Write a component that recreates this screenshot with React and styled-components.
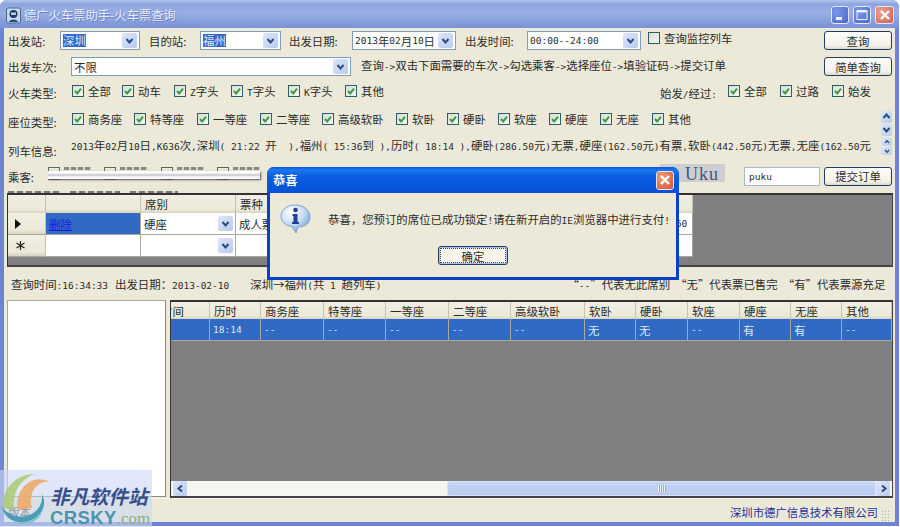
import React from "react";
import styled, { createGlobalStyle } from "styled-components";

const GlobalStyle = createGlobalStyle`
  html, body {
    margin: 0;
    padding: 0;
    background: #fff;
    overflow: hidden;
  }
  * {
    box-sizing: border-box;
  }
`;

const Lat = styled.span`
  font-family: "DejaVu Sans Mono", monospace;
  font-size: 9.5px;
  white-space: pre;
`;

// latin in the original font is half a CJK char wide, so it gets its own span
const T = ({ children }) => (
  <>
    {children.split(/([\x20-\x7e]+)/).map((part, i) =>
      i % 2 ? <Lat key={i}>{part}</Lat> : part
    )}
  </>
);

const Screen = styled.div`
  position: relative;
  width: 900px;
  height: 527px;
  overflow: hidden;
  font-family: "Noto Sans CJK SC", "Liberation Sans", sans-serif;
  font-size: 11.4px;
  color: #2b2b2b;
`;

const Window = styled.div`
  width: 899px;
  height: 526px;
  display: flex;
  flex-direction: column;
  padding: 0 4px 4px 4px;
  border-radius: 7px 7px 0 0;
  background: #6d84d2;
`;

const TitleBar = styled.div`
  height: 28px;
  margin: 0 -4px;
  padding: 2px 5px 0 6px;
  display: flex;
  align-items: center;
  border-radius: 7px 7px 0 0;
  background: linear-gradient(180deg, #b4c6ee 0, #8ea5e0 4px, #9aaee4 13px, #8199da 24px, #7c94d6 100%);
`;

const TitleText = styled.div`
  margin-left: 3px;
  font-size: 12.3px;
  color: #e6ebf8;
  text-shadow: 1px 1px 0 #6b82c8;
`;

const WinButtons = styled.div`
  margin-left: auto;
  display: flex;
  gap: 4px;
`;

const WinButton = styled.div`
  width: ${(p) => (p.$close ? 19 : 18)}px;
  height: 18px;
  border-radius: 3px;
  border: 1px solid #e2e8f8;
  display: flex;
  align-items: center;
  justify-content: center;
  background: ${(p) =>
    p.$close
      ? "radial-gradient(circle at 30% 30%, #f0a08c, #c86454)"
      : "radial-gradient(circle at 30% 30%, #7c98e8, #4a66c8)"};
`;

const Client = styled.div`
  flex: 1;
  display: flex;
  flex-direction: column;
  background: #ece9d8;
  min-height: 0;
`;

const Row = styled.div`
  height: ${(p) => p.$h}px;
  padding: 0 3px 0 4px;
  display: flex;
  align-items: center;
  flex: none;
`;

const Label = styled.div`
  flex: none;
  width: ${(p) => p.$w}px;
  margin-left: ${(p) => p.$ml || 0}px;
  margin-top: ${(p) => p.$mt || 0}px;
  white-space: nowrap;
`;

const Hint = styled.div`
  margin-left: 10px;
  margin-top: -4px;
  white-space: nowrap;
`;

const ComboBox = styled.div`
  flex: none;
  width: ${(p) => p.$w}px;
  margin-left: ${(p) => p.$ml || 0}px;
  height: 19px;
  background: #fff;
  border: 1px solid #7f9db9;
  padding: 1px 2px;
  display: flex;
  align-items: center;
  white-space: nowrap;
`;

const Selected = styled.span`
  background: #316ac5;
  color: #dfe8f8;
  line-height: 13px;
`;

const ArrowBox = styled.div`
  margin-left: auto;
  flex: none;
  width: ${(p) => p.$w || 15}px;
  height: ${(p) => p.$h || 15}px;
  border-radius: 2px;
  display: flex;
  align-items: center;
  justify-content: center;
  background: linear-gradient(135deg, #dce6fa, #b8cbee);
  color: #35507f;
`;

const Chevron = ({ dir = "down", size = 9 }) => {
  const d = {
    down: "M1.5 3 L4.5 6.5 L7.5 3",
    up: "M1.5 6 L4.5 2.5 L7.5 6",
    left: "M6 1.5 L2.5 4.5 L6 7.5",
    right: "M3 1.5 L6.5 4.5 L3 7.5",
  }[dir];
  return (
    <svg width={size} height={size} viewBox="0 0 9 9">
      <path d={d} fill="none" stroke="#2c4a7c" strokeWidth="2" />
    </svg>
  );
};

const Combo = ({ w, ml, children }) => (
  <ComboBox $w={w} $ml={ml}>
    {children}
    <ArrowBox>
      <Chevron />
    </ArrowBox>
  </ComboBox>
);

const Button = styled.div`
  flex: none;
  width: ${(p) => p.$w || 68}px;
  height: 19px;
  margin-left: ${(p) => p.$ml || "auto"};
  border: 1px solid #1f3f66;
  border-radius: 3px;
  background: linear-gradient(180deg, #fdfdfa, #f3f1e8 80%, #dcd8c8);
  display: flex;
  align-items: center;
  justify-content: center;
`;

const CheckItem = styled.div`
  flex: none;
  width: ${(p) => p.$w}px;
  margin-top: ${(p) => p.$mt || 0}px;
  display: flex;
  align-items: center;
  gap: 4px;
  white-space: nowrap;
`;

const Box = styled.div`
  flex: none;
  width: 12px;
  height: 12px;
  border: 1px solid #2c5f66;
  background: linear-gradient(135deg, #dcdcd0, #f6f6f0);
  display: flex;
  align-items: center;
  justify-content: center;
`;

const Tick = () => (
  <svg width="10" height="10" viewBox="0 0 10 10">
    <path d="M2 5 L4.2 7.4 L8 2.6" fill="none" stroke="#2fa04a" strokeWidth="2" />
  </svg>
);

const Check = ({ w, mt, label }) => (
  <CheckItem $w={w} $mt={mt}>
    <Box>
      <Tick />
    </Box>
    <span>
      <T>{label}</T>
    </span>
  </CheckItem>
);

const Monitor = styled(CheckItem)`
  margin-left: 7px;
  margin-top: -6px;
`;

const SpinStack = styled.div`
  margin-left: auto;
  margin-top: ${(p) => p.$mt}px;
  flex: none;
  display: flex;
  flex-direction: column;
  gap: ${(p) => p.$gap}px;
`;

const Info = styled.div`
  margin-top: -3px;
  flex: none;
  width: 806px;
  white-space: nowrap;
  overflow: hidden;
`;

const PassengerArea = styled.div`
  position: relative;
  flex: none;
  width: 212px;
  height: 34px;
  padding-top: 8px;
`;

const GhostItems = styled.div`
  display: flex;
  gap: 13px;
`;

const GhostItem = styled.div`
  width: 50px;
  display: flex;
  gap: 4px;
`;

const GhostBox = styled.div`
  flex: none;
  width: 12px;
  height: 13px;
  border: 1px solid #5c6660;
`;

const GhostLabel = styled.div`
  flex: 1;
  height: 3px;
  background: repeating-linear-gradient(90deg, #8a8a80 0 5px, #d8d5c6 5px 7px);
`;

const Redaction = styled.div`
  position: absolute;
  left: 0;
  top: 12px;
  width: 212px;
  height: 8px;
  background: linear-gradient(180deg, #fff 0, #fff 25%, #c4c4c4 50%, #f2f2f2 70%, #fff 100%);
  box-shadow: 1px 1px 2px #555;
`;

const Smudges = styled.div`
  position: absolute;
  left: -40px;
  bottom: 0;
  display: flex;
  gap: 10px;
`;

const Smudge = styled.div`
  width: ${(p) => p.$w}px;
  height: 2px;
  background: repeating-linear-gradient(90deg, #777 0 6px, #d8d5c6 6px 9px);
`;

const Captcha = styled.div`
  flex: none;
  margin-left: 400px;
  margin-top: -6px;
  width: 65px;
  height: 18px;
  padding-right: 6px;
  background: #cdcdd2;
  color: #43557c;
  font-family: "Liberation Serif", serif;
  font-size: 18px;
  letter-spacing: 1px;
  line-height: 20px;
  text-align: right;
`;

const CodeInput = styled.div`
  flex: none;
  width: 76px;
  height: 19px;
  margin-left: 19px;
  padding-left: 4px;
  background: #fff;
  border: 1px solid #a9b7c6;
  display: flex;
  align-items: center;
`;

const Sunken = styled.div`
  flex: none;
  margin-left: 3px;
  width: ${(p) => p.$w}px;
  height: ${(p) => p.$h}px;
  background: #808080;
  border-style: solid;
  border-width: 2px 1px 2px 1px;
  border-color: #333 #444 #444 #333;
  display: flex;
  flex-direction: column;
  overflow: hidden;
`;

const GridRow = styled.div`
  display: grid;
  grid-template-columns: ${(p) => p.$cols};
  width: ${(p) => p.$width || "100%"};
  height: ${(p) => p.$h}px;
  flex: none;
`;

const HeadCell = styled.div`
  background: linear-gradient(180deg, #f1efe4, #ece9d8 80%, #d8d4c2);
  border-right: 1px solid #c6c2b0;
  padding-left: 4px;
  display: flex;
  align-items: center;
  white-space: nowrap;
  overflow: hidden;
`;

const ClippedHead = styled(HeadCell)`
  padding-left: 0;
  span {
    margin-left: -10px;
  }
`;

const RowHead = styled(HeadCell)`
  border-bottom: 1px solid #aca899;
  padding-left: 7px;
`;

const Cell = styled.div`
  background: ${(p) => (p.$sel ? "#316ac5" : "#fff")};
  color: ${(p) => (p.$sel ? "#dfe8f8" : "#2b2b2b")};
  border-right: 1px solid #aca899;
  border-bottom: 1px solid #aca899;
  padding: 0 2px 0 3px;
  display: flex;
  align-items: center;
  white-space: nowrap;
  overflow: hidden;
`;

const Link = styled.span`
  color: #1a1ae0;
  text-decoration: underline;
`;

const Pointer = styled.div`
  width: 0;
  height: 0;
  border-left: 6px solid #111;
  border-top: 5px solid transparent;
  border-bottom: 5px solid transparent;
`;

const StatusPiece = styled.div`
  flex: none;
  margin-left: ${(p) => p.$ml}px;
  white-space: pre;
`;

const Lower = styled.div`
  flex: none;
  height: 198px;
  display: flex;
  padding-left: 3px;
`;

const ListPane = styled.div`
  flex: none;
  width: 159px;
  height: 197px;
  background: #fff;
  border: 1px solid #aca899;
  border-right-color: #8e8b7c;
  border-bottom-color: #8e8b7c;
`;

const TrainGrid = styled(Sunken)`
  margin-left: 4px;
`;

const GrayFill = styled.div`
  flex: 1;
  background: #808080;
`;

const ScrollBar = styled.div`
  flex: none;
  height: 15px;
  padding: 0 2px;
  display: flex;
  background: #f6f5f0;
`;

const ScrollThumb = styled.div`
  flex: none;
  margin-left: ${(p) => p.$ml}px;
  width: ${(p) => p.$w}px;
  border-radius: 2px;
  background: linear-gradient(180deg, #c6d5f6, #b9cbf2);
  border: 1px solid #d8e2f8;
  display: flex;
  align-items: center;
  justify-content: center;
`;

const Grip = styled.div`
  width: 8px;
  height: 7px;
  background: repeating-linear-gradient(90deg, #eef3fd 0 1px, #8fa8d8 1px 2px);
`;

const StatusBar = styled.div`
  flex: 1;
  padding: 3px 4px 0 4px;
  display: flex;
  align-items: center;
  border-top: 1px solid #f6f4ea;
`;

const Company = styled.div`
  margin-left: auto;
  color: #23319a;
  white-space: nowrap;
`;

const SizeGrip = styled.div`
  width: 10px;
  height: 12px;
  margin-left: 3px;
  align-self: flex-end;
  background-image: radial-gradient(#b0ad9c 1px, transparent 1px);
  background-size: 3px 3px;
`;

const Dialog = styled.div`
  position: absolute;
  left: 267px;
  top: 167px;
  width: 412px;
  height: 113px;
  display: flex;
  flex-direction: column;
  border-radius: 7px 7px 0 0;
  background: #0a3fc8;
  padding: 0 3px 3px 3px;
`;

const DialogTitle = styled.div`
  height: 26px;
  margin: 0 -3px;
  padding: 0 5px 0 6px;
  display: flex;
  align-items: center;
  justify-content: space-between;
  border-radius: 7px 7px 0 0;
  background: linear-gradient(180deg, #0a57d8 0, #1a78f0 3px, #0a5ce0 10px, #0556dc 20px, #0a50d0 100%);
  color: #f4f7ff;
  font-size: 12.3px;
  font-weight: 700;
`;

const DialogClose = styled(WinButton)`
  width: 18px;
  height: 19px;
  background: radial-gradient(circle at 30% 30%, #f0a080, #d8502c);
`;

const DialogBody = styled.div`
  flex: 1;
  background: #ece9d8;
  display: flex;
  flex-direction: column;
  padding: 11px 0 0 10px;
`;

const DialogMessage = styled.div`
  display: flex;
  align-items: center;
  gap: 16px;
  white-space: nowrap;
`;

const DialogButton = styled.div`
  width: 70px;
  height: 19px;
  margin: 12px 0 0 158px;
  border: 1px solid #1f3f66;
  border-radius: 3px;
  box-shadow: inset 0 0 0 1px #a9c0e8;
  outline: 1px dotted #444;
  outline-offset: -3px;
  background: #f6f4ea;
  display: flex;
  align-items: center;
  justify-content: center;
`;

const Watermark = styled.div`
  position: absolute;
  left: 0;
  top: 470px;
  width: 152px;
  height: 57px;
  background: rgba(203, 217, 243, 0.62);
  display: flex;
`;

const LogoText = styled.div`
  margin-left: -2px;
  padding-top: 15px;
  white-space: nowrap;
`;

const LogoCn = styled.div`
  font-size: 19.5px;
  line-height: 22px;
  font-weight: 700;
  font-style: italic;
  color: #36508e;
`;

const LogoEn = styled.div`
  margin-top: 2px;
  font-family: "Liberation Sans", sans-serif;
  font-size: 18.5px;
  line-height: 17px;
  font-weight: 700;
  letter-spacing: 0.4px;
  color: #4d93ad;
`;

const LogoDomain = styled.span`
  font-family: "Liberation Serif", serif;
  font-size: 17px;
  font-weight: 400;
  letter-spacing: 0;
  color: #8fae74;
`;

const headA = "38px 95px 95px 414px 1fr";
const headB = "39px 51px 63px 62px 63px 62px 74px 51px 52px 52px 51px 51px 1fr";

const trainHead = ["历时", "商务座", "特等座", "一等座", "二等座", "高级软卧", "软卧", "硬卧", "软座", "硬座", "无座", "其他"];
const trainRow = ["", "18:14", "--", "--", "--", "--", "--", "无", "无", "--", "有", "有", "--"];

const AppIcon = () => (
  <svg width="15" height="17" viewBox="0 0 15 17">
    <rect x="0.5" y="1" width="14" height="15" rx="2" fill="#c8d8ee" stroke="#4a6a96" />
    <circle cx="7.5" cy="7" r="4" fill="#1f3a63" />
    <rect x="5" y="5.5" width="5" height="2.4" fill="#bcd6f0" />
    <path d="M3 15 C3 11.5 12 11.5 12 15 Z" fill="#2a4c7c" />
  </svg>
);

const InfoIcon = () => (
  <svg width="32" height="30" viewBox="0 0 32 30">
    <defs>
      <radialGradient id="bubble" cx="35%" cy="25%" r="80%">
        <stop offset="0" stopColor="#ffffff" />
        <stop offset="0.55" stopColor="#c6dcf4" />
        <stop offset="1" stopColor="#6f9ccf" />
      </radialGradient>
    </defs>
    <path
      d="M15 1 C24 1 30 6.5 30 13 C30 19.5 24 23 18 23 L16 29 L12 22.6 C5.5 21.5 1 18 1 12.5 C1 6 7 1 15 1 Z"
      fill="url(#bubble)"
      stroke="#7ba2cf"
    />
    <circle cx="15.5" cy="6" r="2.3" fill="#1f3f9c" />
    <path d="M12.5 10 H17.5 V18 H19 V20 H12 V18 H13.5 V12 H12.5 Z" fill="#1f3f9c" />
  </svg>
);

const Cross = ({ size = 12 }) => (
  <svg width={size} height={size} viewBox="0 0 12 12">
    <path d="M2 2 L10 10 M10 2 L2 10" stroke="#fff" strokeWidth="2.4" />
  </svg>
);

const NewRowMark = () => (
  <svg width="11" height="11" viewBox="0 0 11 11">
    <path d="M5.5 1 V10 M1.5 3 L9.5 8 M9.5 3 L1.5 8" stroke="#222" strokeWidth="1.2" />
  </svg>
);

const Logo = () => (
  <svg width="52" height="57" viewBox="0 0 52 57">
    <path d="M3 38 C1 20 16 4 34 4 C20 10 12 22 14 40 Z" fill="#a8c86a" opacity="0.8" />
    <path d="M18 40 C14 22 30 2 50 12 C36 10 28 24 32 38 Z" fill="#eda860" opacity="0.85" />
    <path d="M2 36 C4 52 24 58 38 46 C44 40 46 32 42 24 C44 38 30 50 16 46 C8 44 4 40 2 36 Z" fill="#4a9cb8" />
    <path d="M12 50 C24 56 36 50 42 42 C38 54 20 58 12 50 Z" fill="#7cc0c8" />
  </svg>
);

const App = () => {
  return (
    <Screen>
      <GlobalStyle />
      <Window>
        <TitleBar>
          <AppIcon />
          <TitleText>德广火车票助手-火车票查询</TitleText>
          <WinButtons>
            <WinButton>
              <svg width="12" height="12" viewBox="0 0 12 12">
                <rect x="2" y="8" width="6" height="3" fill="#f0f4fc" />
              </svg>
            </WinButton>
            <WinButton>
              <svg width="12" height="12" viewBox="0 0 12 12">
                <rect x="1" y="1.5" width="10" height="9" fill="none" stroke="#f0f4fc" />
                <rect x="1" y="1" width="10" height="2.4" fill="#f0f4fc" />
              </svg>
            </WinButton>
            <WinButton $close>
              <Cross />
            </WinButton>
          </WinButtons>
        </TitleBar>

        <Client>
          <Row $h={25}>
            <Label $w={52}>出发站:</Label>
            <Combo w={80}>
              <Selected>深圳</Selected>
            </Combo>
            <Label $w={51} $ml={9}>目的站:</Label>
            <Combo w={81}>
              <Selected>福州</Selected>
            </Combo>
            <Label $w={63} $ml={8}>出发日期:</Label>
            <Combo w={104}>
              <T>2013年02月10日</T>
            </Combo>
            <Label $w={62} $ml={9}>出发时间:</Label>
            <Combo w={114}>
              <T>00:00--24:00</T>
            </Combo>
            <Monitor $w={90}>
              <Box />
              <span>查询监控列车</span>
            </Monitor>
            <Button>查询</Button>
          </Row>

          <Row $h={27}>
            <Label $w={63}>出发车次:</Label>
            <Combo w={280}>不限</Combo>
            <Hint>
              <T>查询-&gt;双击下面需要的车次-&gt;勾选乘客-&gt;选择座位-&gt;填验证码-&gt;提交订单</T>
            </Hint>
            <Button>简单查询</Button>
          </Row>

          <Row $h={23}>
            <Label $w={64} $mt={3}>火车类型:</Label>
            <Check w={50} mt={-2} label="全部" />
            <Check w={52} mt={-2} label="动车" />
            <Check w={57} mt={-2} label="Z字头" />
            <Check w={57} mt={-2} label="T字头" />
            <Check w={57} mt={-2} label="K字头" />
            <Check w={315} mt={-2} label="其他" />
            <Label $w={68} $mt={3}>
              <T>始发/经过:</T>
            </Label>
            <Check w={52} mt={-2} label="全部" />
            <Check w={52} mt={-2} label="过路" />
            <Check w={52} mt={-2} label="始发" />
          </Row>

          <Row $h={30}>
            <Label $w={64} $mt={8}>座位类型:</Label>
            <Check w={62} mt={2} label="商务座" />
            <Check w={63} mt={2} label="特等座" />
            <Check w={63} mt={2} label="一等座" />
            <Check w={62} mt={2} label="二等座" />
            <Check w={74} mt={2} label="高级软卧" />
            <Check w={51} mt={2} label="软卧" />
            <Check w={51} mt={2} label="硬卧" />
            <Check w={51} mt={2} label="软座" />
            <Check w={51} mt={2} label="硬座" />
            <Check w={52} mt={2} label="无座" />
            <Check w={60} mt={2} label="其他" />
            <SpinStack $mt={10} $gap={1}>
              <ArrowBox $w={11} $h={12}>
                <Chevron dir="up" />
              </ArrowBox>
              <ArrowBox $w={11} $h={12}>
                <Chevron />
              </ArrowBox>
            </SpinStack>
          </Row>

          <Row $h={26}>
            <Label $w={63} $mt={10}>列车信息:</Label>
            <Info>
              <T>2013年02月10日,K636次,深圳( 21:22 开  ),福州( 15:36到 ),历时( 18:14 ),硬卧(286.50元)无票,硬座(162.50元)有票,软卧(442.50元)无票,无座(162.50元</T>
            </Info>
            <SpinStack $mt={0} $gap={1}>
              <ArrowBox $w={11} $h={8}>
                <Chevron dir="up" size={6} />
              </ArrowBox>
              <ArrowBox $w={11} $h={8}>
                <Chevron size={6} />
              </ArrowBox>
            </SpinStack>
          </Row>

          <Row $h={34}>
            <Label $w={40} $mt={2}>乘客:</Label>
            <PassengerArea>
              <GhostItems>
                {[0, 1, 2, 3].map((n) => (
                  <GhostItem key={n}>
                    <GhostBox />
                    <GhostLabel />
                  </GhostItem>
                ))}
              </GhostItems>
              <Redaction />
              <Smudges>
                <Smudge $w={52} />
                <Smudge $w={50} />
                <Smudge $w={48} />
              </Smudges>
            </PassengerArea>
            <Captcha>Uku</Captcha>
            <CodeInput>
              <Lat>puku</Lat>
            </CodeInput>
            <Button $ml="4px">提交订单</Button>
          </Row>

          <Sunken $w={886} $h={74}>
            <GridRow $cols={headA} $width="685px" $h={18}>
              <HeadCell />
              <HeadCell />
              <HeadCell>席别</HeadCell>
              <HeadCell>票种</HeadCell>
              <HeadCell />
            </GridRow>
            <GridRow $cols={headA} $width="685px" $h={22}>
              <RowHead>
                <Pointer />
              </RowHead>
              <Cell $sel>
                <Link>删除</Link>
              </Cell>
              <Cell>
                硬座
                <ArrowBox>
                  <Chevron />
                </ArrowBox>
              </Cell>
              <Cell>成人票</Cell>
              <Cell>
                <T>162.50</T>
              </Cell>
            </GridRow>
            <GridRow $cols={headA} $width="685px" $h={22}>
              <RowHead>
                <NewRowMark />
              </RowHead>
              <Cell />
              <Cell>
                <ArrowBox>
                  <Chevron />
                </ArrowBox>
              </Cell>
              <Cell />
              <Cell />
            </GridRow>
            <GrayFill />
          </Sunken>

          <Row $h={33}>
            <StatusPiece $ml={3}>
              <T>查询时间:16:34:33</T>
            </StatusPiece>
            <StatusPiece $ml={7}>
              出发日期：<T>2013-02-10</T>
            </StatusPiece>
            <StatusPiece $ml={21}>
              <T>深圳→福州(共 1 趟列车)</T>
            </StatusPiece>
            <StatusPiece $ml={186}>
              “<T>--</T>”代表无此席别  “无”代表票已售完  “有”代表票源充足
            </StatusPiece>
          </Row>

          <Lower>
            <ListPane />
            <TrainGrid $w={723} $h={198}>
              <GridRow $cols={headB} $h={17}>
                <ClippedHead>
                  <span>时间</span>
                </ClippedHead>
                {trainHead.map((h) => (
                  <HeadCell key={h}>{h}</HeadCell>
                ))}
              </GridRow>
              <GridRow $cols={headB} $h={22}>
                {trainRow.map((c, i) => (
                  <Cell key={i} $sel>
                    <T>{c}</T>
                  </Cell>
                ))}
              </GridRow>
              <GrayFill />
              <ScrollBar>
                <ArrowBox $w={14} $h={15}>
                  <Chevron dir="left" />
                </ArrowBox>
                <ScrollThumb $ml={260} $w={429}>
                  <Grip />
                </ScrollThumb>
                <ArrowBox $w={14} $h={15}>
                  <Chevron dir="right" />
                </ArrowBox>
              </ScrollBar>
            </TrainGrid>
          </Lower>

          <StatusBar>
            <span>版本</span>
            <Company>深圳市德广信息技术有限公司</Company>
            <SizeGrip />
          </StatusBar>
        </Client>
      </Window>

      <Dialog>
        <DialogTitle>
          恭喜
          <DialogClose>
            <Cross />
          </DialogClose>
        </DialogTitle>
        <DialogBody>
          <DialogMessage>
            <InfoIcon />
            <span>
              恭喜，您预订的席位已成功锁定<T>!</T>请在新开启的<T>IE</T>浏览器中进行支付<T>!</T>
            </span>
          </DialogMessage>
          <DialogButton>确定</DialogButton>
        </DialogBody>
      </Dialog>

      <Watermark>
        <Logo />
        <LogoText>
          <LogoCn>非凡软件站</LogoCn>
          <LogoEn>
            CRSKY<LogoDomain>.com</LogoDomain>
          </LogoEn>
        </LogoText>
      </Watermark>
    </Screen>
  );
};

export default App;
